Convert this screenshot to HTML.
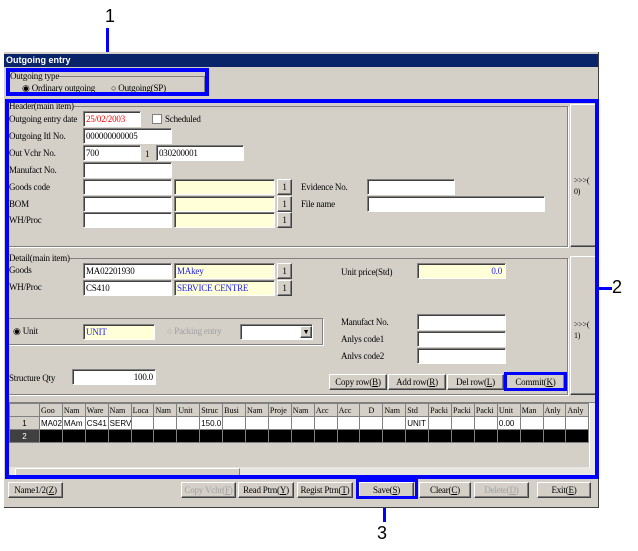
<!DOCTYPE html>
<html><head><meta charset="utf-8"><style>
*{box-sizing:border-box;margin:0;padding:0}
body{width:638px;height:551px;background:#fff;position:relative;overflow:hidden;font-family:"Liberation Serif",serif;font-size:9px;letter-spacing:-0.2px;color:#000}
.a{position:absolute}
.win{left:4px;top:52px;width:595px;height:456px;background:#d4d0c8;border-right:1px solid #404040;border-bottom:1px solid #404040}
.title{left:4px;top:54px;width:594px;height:13px;background:#0a246a;color:#fff;font-family:"Liberation Sans",sans-serif;font-weight:bold;font-size:9px;letter-spacing:0;line-height:13px;padding-left:2px}
.lbl{position:absolute;white-space:nowrap;line-height:12px}
.in{position:absolute;background:#fff;border-top:1px solid #808080;border-left:1px solid #808080;border-bottom:1px solid #fff;border-right:1px solid #fff;box-shadow:inset 1px 1px 0 #404040;height:16px;line-height:14px;padding-left:2px;white-space:nowrap;overflow:hidden}
.y{background:#ffffd8}
.bl{color:#2020ff}
.btn{position:absolute;background:#d4d0c8;border:1px solid;border-color:#fff #404040 #404040 #fff;box-shadow:inset -1px -1px 0 #808080;text-align:center;line-height:14px;height:16px;white-space:nowrap}
.grp{position:absolute;border:1px solid #808080;box-shadow:1px 1px 0 #fff}
.blue{position:absolute;border:4px solid #0000ff}
.dis{color:#a0a0a0}
table{border-collapse:collapse;font-family:"Liberation Sans",sans-serif;font-size:8px;letter-spacing:0;table-layout:fixed}
td{border:1px solid #808080;height:13px;overflow:hidden;white-space:nowrap;padding:0 1px;width:23px}
</style></head><body>
<div class="a" style="left:105px;top:6px;font-family:'Liberation Sans';font-size:18px;letter-spacing:0">1</div>
<div class="a" style="left:106px;top:28px;width:3px;height:40px;background:#0000ff"></div>
<div class="a" style="left:612px;top:277px;font-family:'Liberation Sans';font-size:18px;letter-spacing:0">2</div>
<div class="a" style="left:598px;top:287px;width:14px;height:3px;background:#0000ff"></div>
<div class="a" style="left:377px;top:523px;font-family:'Liberation Sans';font-size:18px;letter-spacing:0">3</div>
<div class="a" style="left:383px;top:496px;width:3px;height:26px;background:#0000ff"></div>

<div class="a win"></div>
<div class="a title">Outgoing entry</div>

<div class="grp" style="left:9px;top:76px;width:196px;height:17px"></div>
<div class="lbl" style="left:10px;top:70px;background:#d4d0c8">Outgoing type</div>
<div class="lbl" style="left:22px;top:82px">◉ Ordinary outgoing</div>
<div class="lbl" style="left:111px;top:82px">○ Outgoing(SP)</div>
<div class="blue" style="left:6px;top:68px;width:203px;height:28px"></div>

<div class="grp" style="left:8px;top:106px;width:560px;height:141px"></div>
<div class="lbl" style="left:9px;top:100px;background:#d4d0c8">Header(main item)</div>
<div class="lbl" style="left:9px;top:113px">Outgoing entry date</div>
<div class="in" style="left:83px;top:111px;width:58px;color:#f00">25/02/2003</div>
<div class="a" style="left:152px;top:114px;width:10px;height:10px;background:#fff;border:1px solid #808080"></div>
<div class="lbl" style="left:165px;top:113px">Scheduled</div>
<div class="lbl" style="left:9px;top:130px">Outgoing Itl No.</div>
<div class="in" style="left:83px;top:128px;width:89px">000000000005</div>
<div class="lbl" style="left:9px;top:147px">Out Vchr No.</div>
<div class="in" style="left:83px;top:145px;width:58px">700</div>
<div class="lbl" style="left:145px;top:148px">1</div>
<div class="in" style="left:156px;top:145px;width:88px">030200001</div>
<div class="lbl" style="left:9px;top:164px">Manufact No.</div>
<div class="in" style="left:83px;top:162px;width:89px"></div>
<div class="lbl" style="left:9px;top:181px">Goods code</div>
<div class="in" style="left:83px;top:179px;width:89px"></div>
<div class="in y" style="left:174px;top:179px;width:101px"></div>
<div class="btn" style="left:277px;top:179px;width:15px">1</div>
<div class="lbl" style="left:301px;top:181px">Evidence No.</div>
<div class="in" style="left:367px;top:179px;width:88px"></div>
<div class="lbl" style="left:9px;top:198px">BOM</div>
<div class="in" style="left:83px;top:196px;width:89px"></div>
<div class="in y" style="left:174px;top:196px;width:101px"></div>
<div class="btn" style="left:277px;top:196px;width:15px">1</div>
<div class="lbl" style="left:301px;top:198px">File name</div>
<div class="in" style="left:367px;top:196px;width:178px"></div>
<div class="lbl" style="left:9px;top:214px">WH/Proc</div>
<div class="in" style="left:83px;top:212px;width:89px"></div>
<div class="in y" style="left:174px;top:212px;width:101px"></div>
<div class="btn" style="left:277px;top:212px;width:15px">1</div>

<div class="btn" style="left:570px;top:104px;width:27px;height:143px;text-align:left;padding:70px 0 0 3px;line-height:11px;font-size:8px">&gt;&gt;&gt;(<br>0)</div>

<div class="grp" style="left:8px;top:258px;width:560px;height:137px"></div>
<div class="lbl" style="left:9px;top:252px;background:#d4d0c8">Detail(main item)</div>
<div class="lbl" style="left:9px;top:264px">Goods</div>
<div class="in" style="left:83px;top:263px;width:89px">MA02201930</div>
<div class="in y bl" style="left:174px;top:263px;width:101px">MAkey</div>
<div class="btn" style="left:277px;top:263px;width:15px">1</div>
<div class="lbl" style="left:9px;top:281px">WH/Proc</div>
<div class="in" style="left:83px;top:280px;width:89px">CS410</div>
<div class="in y bl" style="left:174px;top:280px;width:101px">SERVICE CENTRE</div>
<div class="btn" style="left:277px;top:280px;width:15px">1</div>
<div class="lbl" style="left:341px;top:266px">Unit price(Std)</div>
<div class="in y bl" style="left:417px;top:263px;width:89px;text-align:right;padding-right:3px">0.0</div>

<div class="grp" style="left:8px;top:318px;width:315px;height:27px"></div>
<div class="lbl" style="left:13px;top:325px">◉ Unit</div>
<div class="in y bl" style="left:83px;top:324px;width:72px">UNIT</div>
<div class="lbl dis" style="left:167px;top:325px">○ Packing entry</div>
<div class="in" style="left:240px;top:324px;width:73px"></div>
<div class="btn" style="left:300px;top:326px;width:12px;height:12px;font-size:7px;line-height:10px">▼</div>

<div class="lbl" style="left:341px;top:316px">Manufact No.</div>
<div class="in" style="left:417px;top:314px;width:89px"></div>
<div class="lbl" style="left:341px;top:333px">Anlys code1</div>
<div class="in" style="left:417px;top:331px;width:89px"></div>
<div class="lbl" style="left:341px;top:350px">Anlvs code2</div>
<div class="in" style="left:417px;top:348px;width:89px"></div>
<div class="lbl" style="left:9px;top:372px">Structure Qty</div>
<div class="in" style="left:72px;top:369px;width:84px;text-align:right;padding-right:2px">100.0</div>
<div class="btn" style="left:329px;top:374px;width:58px">Copy row(<u>B</u>)</div>
<div class="btn" style="left:388px;top:374px;width:58px">Add row(<u>R</u>)</div>
<div class="btn" style="left:447px;top:374px;width:57px">Del row(<u>L</u>)</div>
<div class="btn" style="left:506px;top:374px;width:59px">Commit(<u>K</u>)</div>
<div class="blue" style="left:504px;top:372px;width:63px;height:19px;border-width:3px"></div>

<div class="btn" style="left:570px;top:256px;width:27px;height:139px;text-align:left;padding:62px 0 0 3px;line-height:11px;font-size:8px">&gt;&gt;&gt;(<br>1)</div>

<div class="a" style="left:8px;top:402px;width:589px;height:75px;background:#d4d0c8;overflow:hidden;border:1px solid #808080">
<table style="width:580px">
<colgroup><col style="width:30px"><col span="24" style="width:22.9px"></colgroup>
<tr style="background:#d4d0c8;font-family:'Liberation Serif';font-size:8px"><td></td><td>Goo</td><td>Nam</td><td>Ware</td><td>Nam</td><td>Loca</td><td>Nam</td><td>Unit</td><td>Struc</td><td>Busi</td><td>Nam</td><td>Proje</td><td>Nam</td><td>Acc</td><td>Acc</td><td style="text-align:center">D</td><td>Nam</td><td>Std</td><td>Packi</td><td>Packi</td><td>Packi</td><td>Unit</td><td>Man</td><td>Anly</td><td>Anly</td></tr>
<tr style="background:#fff"><td style="background:#d4d0c8;text-align:center">1</td><td>MA02</td><td>MAm</td><td>CS41</td><td>SERV</td><td></td><td></td><td></td><td>150.0</td><td></td><td></td><td></td><td></td><td></td><td></td><td></td><td></td><td>UNIT</td><td></td><td></td><td></td><td>0.00</td><td></td><td></td><td></td></tr>
<tr style="background:#000;color:#fff"><td style="background:#404040;text-align:center">2</td><td></td><td></td><td></td><td></td><td></td><td></td><td></td><td></td><td></td><td></td><td></td><td></td><td></td><td></td><td></td><td></td><td></td><td></td><td></td><td></td><td></td><td></td><td></td><td></td></tr>
</table>
<div class="a" style="left:580px;top:0;width:9px;height:75px;background:#e8e6e0;border-left:1px solid #fff"></div>
<div class="a" style="left:0;top:64px;width:589px;height:10px;background:#e8e6e0"></div>
<div class="a" style="left:6px;top:65px;width:225px;height:9px;background:#d4d0c8;border:1px solid;border-color:#fff #808080 #808080 #fff"></div>
</div>
<div class="blue" style="left:5px;top:99px;width:594px;height:380px"></div>

<div class="btn" style="left:8px;top:482px;width:55px">Name1/2(<u>Z</u>)</div>
<div class="btn dis" style="left:181px;top:482px;width:55px">Copy Vchr(<u>F</u>)</div>
<div class="btn" style="left:238px;top:482px;width:56px">Read Ptrn(<u>Y</u>)</div>
<div class="btn" style="left:297px;top:482px;width:56px">Regist Ptrn(<u>T</u>)</div>
<div class="btn" style="left:359px;top:482px;width:55px">Save(<u>S</u>)</div>
<div class="blue" style="left:356px;top:479px;width:62px;height:20px;border-width:3px"></div>
<div class="btn" style="left:419px;top:482px;width:52px">Clear(<u>C</u>)</div>
<div class="btn dis" style="left:474px;top:482px;width:55px">Delete(<u>D</u>)</div>
<div class="btn" style="left:537px;top:482px;width:54px">Exit(<u>E</u>)</div>
</body></html>
